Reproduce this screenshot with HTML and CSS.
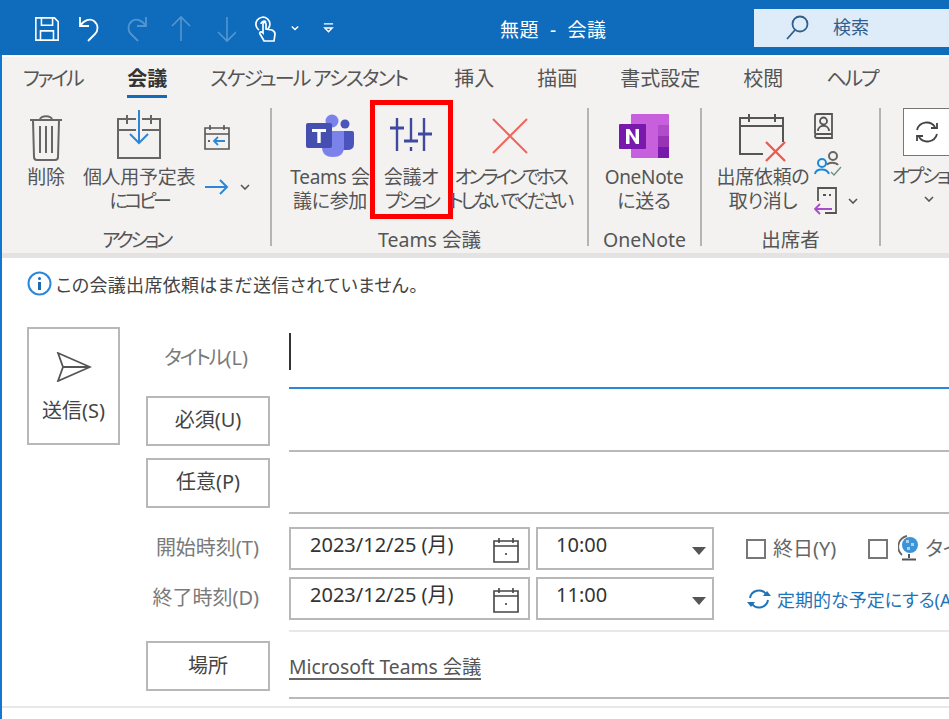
FILE: index.html
```html
<!DOCTYPE html>
<html lang="ja">
<head>
  <meta charset="UTF-8" />
  <meta name="viewport" content="width=device-width, initial-scale=1.0" />
  <title>無題 - 会議</title>
  <link rel="stylesheet" href="styles.css">
</head>
<body>
  <header class="titlebar">
    <div class="qat">
      <svg class="qat-icon" width="26" height="26" viewBox="0 0 28 28" fill="none" stroke="#fff" stroke-width="1.7"><path d="M2 2h20l4 4v20H2zM8 2v8h12V2M7 26V16h14v10"/></svg>
      <svg class="qat-icon" width="26" height="28" viewBox="3 0 26 28" fill="none" stroke="#fff" stroke-width="1.8"><path d="M4 2v9h9M4 11c4-6 10-8 14-5 5 4 4 10 1 13l-7 7"/></svg>
      <svg class="qat-icon dim" width="26" height="28" viewBox="0 0 26 28" fill="none" stroke="#fff" stroke-width="1.8"><path d="M22 2v9h-9M22 11c-4-6-10-8-14-5-5 4-4 10-1 13l7 7"/></svg>
      <svg class="qat-icon dim" width="24" height="28" viewBox="0 0 24 28" fill="none" stroke="#fff" stroke-width="1.6"><path d="M12 26V2M3 11l9-9 9 9"/></svg>
      <svg class="qat-icon dim" width="24" height="28" viewBox="-3 0 24 28" fill="none" stroke="#fff" stroke-width="1.6"><path d="M12 2v24M3 17l9 9 9-9"/></svg>
      <svg class="qat-touch" width="22" height="28" viewBox="0 0 22 28" fill="none" stroke="#fff" stroke-width="1.7"><path d="M4 15a7 7 0 1 1 9-1M6 9a3 3 0 0 1 5-2M8 24l-3-5c-1-2 1-3 3-1V9c0-2 3-2 3 0v5l6 1c2 1 3 2 3 4l-1 7H9z"/></svg>
      <svg class="qat-chev" width="8" height="6" viewBox="0 0 10 6" fill="none" stroke="#fff" stroke-width="1.8"><path d="M1 1l4 4 4-4"/></svg>
      <svg class="qat-more" width="11" height="12" viewBox="0 0 12 12" fill="none" stroke="#fff" stroke-width="1.5"><path d="M1 1.500h10M2 6l4 4 4-4z"/></svg>
    </div>
    <div class="doc-title">無題 &nbsp;- &nbsp;会議</div>
    <div class="search">
      <svg width="26" height="28" viewBox="0 0 26 28" fill="none" stroke="#2f5f8f" stroke-width="1.8"><circle cx="16" cy="10" r="7.5"/><path d="M11 16l-8 9"/></svg>
      <span>検索</span>
    </div>
  </header>

  <div class="window">
    <section class="ribbon">
      <nav class="tabs">
        <span class="tab tab-file">ファイル</span>
        <span class="tab active">会議</span>
        <span class="tab tab-assist">スケジュール アシスタント</span>
        <span class="tab">挿入</span>
        <span class="tab">描画</span>
        <span class="tab">書式設定</span>
        <span class="tab">校閲</span>
        <span class="tab tab-help">ヘルプ</span>
      </nav>
      <div class="groups">
        <div class="group g-action">
          <div class="group-body">
            <div class="tool t-delete">
              <svg class="tool-icon" width="36" height="48" viewBox="0 0 36 48" fill="none" stroke="#666" stroke-width="2"><path d="M2 7h32M5 7l1 37q0 3 3 3h18q3 0 3-3l1-37M12 7c0-5 12-5 12 0M12 13v27M18 13v27M24 13v27"/></svg>
              <span>削除</span>
            </div>
            <div class="tool t-copy">
              <svg class="tool-icon" width="46" height="50" viewBox="0 0 46 50" fill="none" stroke="#666" stroke-width="2"><path d="M20 9H2v39h42V9H26M2 20h18M26 20h18M11 5v9M35 5v9"/><path stroke="#2b88d8" d="M23 0v33M14 24l9 9 9-9"/></svg>
              <span>個人用予定表<br><b class="kana-l">にコピー</b></span>
            </div>
            <div class="small-col sc-action">
              <svg width="26" height="28" viewBox="0 0 26 28" fill="none" stroke="#555" stroke-width="1.6"><path d="M1 5h24v21H1zM1 11h24M6 2v5M20 2v5"/><path stroke="#2b88d8" stroke-width="1.8" d="M21 18H10M14 14l-4 4 4 4"/><circle cx="5" cy="18" r="1" fill="#333" stroke="none"/></svg>
              <div class="small-row">
                <svg width="26" height="18" viewBox="0 0 26 18" fill="none" stroke="#2b88d8" stroke-width="2"><path d="M1 9h22M16 2l7 7-7 7"/></svg>
                <svg class="chev" width="10" height="6" viewBox="0 0 10 6" fill="none" stroke="#555" stroke-width="1.6"><path d="M1 1l4 4 4-4"/></svg>
              </div>
            </div>
          </div>
          <div class="group-label kana-l">アクション</div>
        </div>

        <div class="group g-teams">
          <div class="group-body">
            <div class="tool t-join">
              <svg class="tool-icon" width="48" height="44" viewBox="0 0 48 44">
                <circle cx="39" cy="11" r="4.5" fill="#4b53bc"/>
                <path d="M30 18h16q2 0 2 2v11q0 6-7 6h-11z" fill="#4b53bc"/>
                <circle cx="26" cy="8" r="6.5" fill="#7b83eb"/>
                <path d="M16 18h22v16q0 10-11 10t-11-10z" fill="#7b83eb"/>
                <rect x="0" y="10" width="26" height="25" rx="2" fill="#444fb0"/>
                <path d="M6 16h14v3h-5.300v11h-3.400V19H6z" fill="#fff"/>
              </svg>
              <span>Teams 会<br>議に参加</span>
            </div>
            <div class="tool t-options">
              <svg class="tool-icon" width="42" height="34" viewBox="0 0 42 34" fill="none" stroke="#3f4a9e" stroke-width="2.400"><path d="M7 0v33M21 0v23M21 29v4M34 0v33"/><path stroke-width="3" d="M0 10h14M14 23h14M28 16h14"/></svg>
              <span>会議オ<br><b class="kana-l">プション</b></span>
              <div class="highlight"></div>
            </div>
            <div class="tool t-nohost">
              <svg class="tool-icon" width="36" height="36" viewBox="0 0 36 36" fill="none" stroke="#f0665e" stroke-width="2"><path d="M1 1l34 34M35 1L1 35"/></svg>
              <span class="kana">オンラインでホス<br>トしないでください</span>
            </div>
          </div>
          <div class="group-label">Teams 会議</div>
        </div>

        <div class="group g-onenote">
          <div class="group-body">
            <div class="tool t-onenote">
              <svg class="tool-icon" width="50" height="46" viewBox="0 0 50 46">
                <rect x="12" y="0" width="38" height="44" rx="1" fill="#c85fdc"/>
                <rect x="39" y="11" width="11" height="11" fill="#b04cc8"/>
                <rect x="39" y="22" width="11" height="11" fill="#9a32b5"/>
                <rect x="39" y="33" width="11" height="11" fill="#7719aa"/>
                <rect x="0" y="10" width="27" height="25" rx="1" fill="#7719aa"/>
                <path d="M7 30V15h3.500l6 9.500V15H20v15h-3.200l-6.300-10v10z" fill="#fff"/>
              </svg>
              <span>OneNote<br>に送る</span>
            </div>
          </div>
          <div class="group-label">OneNote</div>
        </div>

        <div class="group g-attend">
          <div class="group-body">
            <div class="tool t-cancel">
              <svg class="tool-icon" width="48" height="50" viewBox="0 0 48 50" fill="none" stroke="#555" stroke-width="2"><path d="M24 40H1V4h43v24M1 12h43M10 0v8M36 0v8"/><path stroke="#ee5a50" stroke-width="2.400" d="M27 28l19 19M46 28L27 47"/></svg>
              <span>出席依頼の<br>取り消し</span>
            </div>
            <div class="small-col sc-attend">
              <svg width="20" height="26" viewBox="0 0 20 26" fill="none" stroke="#555" stroke-width="1.800"><path d="M1 21V3q0-2 2-2h15v24H3q-2 0-2-2 0-2 2-2h15"/><circle cx="9.500" cy="8" r="3.500"/><path d="M4 18c0-7 11-7 11 0"/></svg>
              <svg width="28" height="26" viewBox="0 0 28 26" fill="none" stroke-width="2"><circle cx="19" cy="6" r="4" stroke="#666"/><path stroke="#666" d="M13 15c1-3 9-3 11 0"/><circle cx="8" cy="13" r="4" stroke="#1e88d8"/><path stroke="#1e88d8" d="M1 24c1-6 12-6 14 0"/><path stroke="#6f8f8a" stroke-width="1.400" d="M17 22l3 3 7-8"/></svg>
              <div class="small-row">
                <svg width="24" height="28" viewBox="0 0 24 28" fill="none" stroke="#555" stroke-width="1.800"><path d="M4 14V1h18v25H11"/><path stroke-width="2" d="M9 8h3M15 8h2"/><path stroke="#a64dc9" stroke-width="1.800" d="M18 22H1M6 17l-5 5 5 5"/></svg>
                <svg class="chev" width="10" height="6" viewBox="0 0 10 6" fill="none" stroke="#555" stroke-width="1.600"><path d="M1 1l4 4 4-4"/></svg>
              </div>
            </div>
          </div>
          <div class="group-label">出席者</div>
        </div>

        <div class="group g-more">
          <div class="option-box">
            <svg width="26" height="26" viewBox="0 0 26 26" fill="none" stroke="#444" stroke-width="1.800"><path d="M3 11a10 10 0 0 1 18-3M23 15a10 10 0 0 1-18 3"/><path d="M17 9h6V4M9 17H3v5"/></svg>
          </div>
          <div class="option-label kana">オプション</div>
          <svg class="option-chev" width="10" height="6" viewBox="0 0 10 6" fill="none" stroke="#555" stroke-width="1.600"><path d="M1 1l4 4 4-4"/></svg>
        </div>
      </div>
    </section>

    <div class="notice">
      <svg width="25" height="25" viewBox="0 0 25 25"><circle cx="12.500" cy="12.500" r="11" fill="none" stroke="#2b88d8" stroke-width="2"/><circle cx="12.500" cy="7.500" r="1.500" fill="#1a6cb0"/><path d="M11 11h3v8h-3z" fill="#1a6cb0"/></svg>
      <span>この会議出席依頼はまだ送信されていません。</span>
    </div>

    <form class="compose">
      <div class="send">
        <svg width="36" height="30" viewBox="0 0 36 30" fill="none" stroke="#555" stroke-width="1.800"><path d="M2 1l32 14L2 29l5-14zM7 15h27"/></svg>
        <span>送信(S)</span>
      </div>
      <div class="fields">
        <div class="row row-title">
          <label class="label"><b class="kana-s">タイトル</b>(L)</label>
          <div class="field"><i class="cursor"></i></div>
        </div>
        <div class="row row-required">
          <div class="btn">必須(U)</div>
          <div class="field"></div>
        </div>
        <div class="row row-optional">
          <div class="btn">任意(P)</div>
          <div class="field"></div>
        </div>
        <div class="times">
          <div class="row time-row">
            <label class="label">開始時刻(T)</label>
            <div class="time-inputs">
              <div class="date-box">2023/12/25 (月)
                <svg width="26" height="26" viewBox="0 0 26 26" fill="none" stroke="#444" stroke-width="1.600"><path d="M1 4h24v21H1zM1 9h24M6 1v5M20 1v5"/><circle cx="13" cy="17" r="1" fill="#333" stroke="none"/></svg>
              </div>
              <div class="time-box">10:00<i class="caret"></i></div>
              <div class="opt opt-allday"><i class="check"></i>終日(Y)</div>
              <div class="opt opt-zone"><i class="check"></i>
                <svg width="22" height="26" viewBox="0 0 22 26"><path d="M9 1a11 11 0 0 0-5 19" fill="none" stroke="#666" stroke-width="1.800"/><circle cx="12" cy="10" r="8" fill="#3c93d8"/><path d="M8 5h3v3H8zM13 8h3v3h-3zM9 12h3v3H9z" fill="#a9d2f0"/><path d="M11 19v4M4 24.500h14" stroke="#555" stroke-width="2"/></svg>
                タイムゾーン
              </div>
            </div>
          </div>
          <div class="row time-row">
            <label class="label">終了時刻(D)</label>
            <div class="time-inputs">
              <div class="date-box">2023/12/25 (月)
                <svg width="26" height="26" viewBox="0 0 26 26" fill="none" stroke="#444" stroke-width="1.600"><path d="M1 4h24v21H1zM1 9h24M6 1v5M20 1v5"/><circle cx="13" cy="17" r="1" fill="#333" stroke="none"/></svg>
              </div>
              <div class="time-box">11:00<i class="caret"></i></div>
              <div class="repeat">
                <svg width="26" height="22" viewBox="0 0 26 22" fill="none" stroke="#1f74b8" stroke-width="2"><path d="M4 10a9 9 0 0 1 16-4M22 12a9 9 0 0 1-16 4"/><path fill="#1f74b8" stroke="none" d="M17 8h8l-4-5zM9 14H1l4 5z"/></svg>
                定期的な予定にする(A)
              </div>
            </div>
          </div>
        </div>
        <div class="row row-location">
          <div class="btn">場所</div>
          <div class="field"><a class="location">Microsoft Teams 会議</a></div>
        </div>
      </div>
    </form>
    <div class="bottom-line"></div>
  </div>
</body>
</html>
```

FILE: styles.css
```css
* {
  box-sizing: border-box;
}

html, body {
  height: 100%;
}

body {
  margin: 0;
  background: #fff;
  color: #444;
  font-family: "Noto Sans", "Noto Sans CJK JP", sans-serif;
  font-size: 20px;
  font-feature-settings: "palt";
  overflow: hidden;
}

b { font-weight: 400; }

/* kana runs are set much tighter than kanji in the original UI font */
.kana-s { letter-spacing: -2px; }
.kana { letter-spacing: -2.500px; }
.kana-l { letter-spacing: -3.400px; }

/* title bar */
.titlebar {
  height: 55px;
  background: #0f6cbd;
  color: #fff;
  display: flex;
}

.qat {
  display: flex;
  align-items: center;
  width: 500px;
  padding: 0 0 0 34px;
  height: 58px;
}

.qat-icon { margin-right: 19px; flex: none; }
.qat-icon.dim { opacity: .28; }
.qat-touch { margin-right: 14px; flex: none; }
.qat-chev { margin: 0 24px 3px 0; flex: none; }
.qat-more { margin-bottom: 2px; flex: none; }

.doc-title {
  width: 254px;
  padding-top: 17px;
  font-size: 19px;
  letter-spacing: .5px;
  line-height: 26px;
  white-space: nowrap;
}

.search {
  flex: 1;
  height: 38px;
  margin-top: 9px;
  padding-left: 30px;
  background: #deecf9;
  color: #2f5f8f;
  display: flex;
  align-items: center;
  gap: 23px;
  font-size: 18px;
}

.search span { margin-bottom: 4px; }

/* everything under the title bar */
.window {
  border-left: 2px solid #1277d0;
  height: 664px;
}

.ribbon {
  height: 203px;
  background: #f3f2f1;
  border-top: 2px solid #fff;
  border-bottom: 5px solid #e4e3e2;
}

.tabs {
  display: flex;
  height: 51px;
  padding: 7px 0 0 21px;
  font-size: 20px;
  line-height: 30px;
  color: #555;
  white-space: nowrap;
}

.tab { margin-right: 43px; }
.tab-file { letter-spacing: -2.500px; margin-right: 45px; }
.tab-assist { letter-spacing: -1.800px; margin-right: 47px; }
.tab-help { letter-spacing: -2px; }

.tab.active {
  height: 34px;
  font-weight: 700;
  color: #333;
  border-bottom: 3px solid #0f6cbd;
}

.groups {
  display: flex;
  height: 138px;
}

.group {
  display: flex;
  flex-direction: column;
  border-right: 2px solid #b5b4b3;
  flex: none;
}

.group-body {
  display: flex;
  flex: 1;
}

.group-label {
  height: 24px;
  margin-bottom: -6px;
  text-align: center;
  font-size: 19.500px;
  line-height: 24px;
  color: #555;
}

.g-action { width: 270px; }
.g-teams { width: 317px; }
.g-onenote { width: 113px; }
.g-attend { width: 179px; }
.g-more { border-right: 0; position: relative; width: 67px; }

.tool {
  display: grid;
  grid-template-rows: 57px auto;
  justify-items: center;
  align-content: start;
  position: relative;
  font-size: 19px;
  line-height: 24px;
  text-align: center;
  color: #555;
  white-space: nowrap;
}

.tool span { letter-spacing: -.3px; }
.tool span.kana { letter-spacing: -3.300px; }

.t-delete { width: 52px; margin-left: 18px; }
.t-delete .tool-icon { margin-top: 5px; }
.t-copy { width: 122px; margin-left: 6px; }
.t-copy .tool-icon { margin-top: 2px; }
.t-join { width: 90px; margin-left: 13px; }
.t-join .tool-icon { margin-top: 5px; }
.t-options { width: 72px; }
.t-options .tool-icon { margin-top: 10px; }
.t-nohost { width: 126px; }
.t-nohost .tool-icon { margin-top: 10px; }
.t-onenote { width: 88px; margin-left: 11px; }
.t-onenote .tool-icon { margin-top: 6px; }
.t-cancel { width: 96px; margin-left: 13px; }
.t-cancel .tool-icon { margin-top: 6px; }

.highlight {
  position: absolute;
  left: -5px;
  top: -8px;
  width: 83px;
  height: 119px;
  border: 5px solid #f00;
}

.small-col {
  display: flex;
  flex-direction: column;
  white-space: nowrap;
}

.small-row { display: flex; align-items: center; }
.chev { margin-left: 10px; }

.sc-action { margin-left: 4px; padding-top: 15px; gap: 27px; }
.sc-attend { margin-left: 3px; padding-top: 5px; gap: 11px; align-items: flex-start; }

.option-box {
  width: 60px;
  height: 48px;
  margin-left: 22px;
  padding-left: 10px;
  background: #fff;
  border: 1px solid #777;
  display: flex;
  align-items: center;
}

.option-label {
  margin: 6px 0 0 11px;
  font-size: 19px;
  line-height: 28px;
  white-space: nowrap;
  color: #555;
}

.option-chev { margin: 6px 0 0 43px; }

/* message bar */
.notice {
  display: flex;
  align-items: center;
  gap: 4px;
  height: 25px;
  margin: 13px 0 0 25px;
  font-size: 18px;
  letter-spacing: .3px;
  color: #444;
  white-space: nowrap;
}

/* form */
.compose {
  display: flex;
  margin: 31px 0 0 25px;
}

.send {
  width: 93px;
  height: 118px;
  border: 2px solid #b8b8b8;
  display: flex;
  flex-direction: column;
  align-items: center;
  padding-top: 23px;
  gap: 17px;
  flex: none;
  line-height: 24px;
  color: #444;
}

.fields {
  flex: 1;
  margin-left: 26px;
  min-width: 0;
}

.row {
  display: grid;
  grid-template-columns: 124px 1fr;
  column-gap: 19px;
}

.label {
  text-align: right;
  line-height: 24px;
  color: #7a7a7a;
  white-space: nowrap;
}

.field { border-bottom: 2px solid #b9b9b9; }

.btn {
  height: 50px;
  padding-bottom: 2px;
  border: 2px solid #b8b8b8;
  display: flex;
  align-items: center;
  justify-content: center;
  line-height: 24px;
  color: #444;
}

.row-title { height: 62px; }
.row-title .label { padding: 19px 22px 0 0; }
.row-title .field { border-bottom-color: #2b88d8; padding-top: 6px; }

.cursor {
  display: block;
  width: 2px;
  height: 37px;
  background: #333;
}

.row-required { height: 63px; padding-top: 7px; }
.row-optional { height: 62px; padding-top: 6px; }

.times {
  padding-top: 13px;
  height: 118px;
  background: linear-gradient(#e8e8e8, #e8e8e8) 143px 100%/100% 2px no-repeat;
}

.time-row { height: 50px; }
.time-row .label { padding: 9px 11px 0 0; }

.time-inputs {
  display: flex;
  align-items: flex-start;
  white-space: nowrap;
}

.date-box {
  width: 241px;
  height: 43px;
  flex: none;
  border: 2px solid #b8b8b8;
  padding: 2px 9px 0 19px;
  display: flex;
  justify-content: space-between;
  line-height: 28px;
  color: #333;
}

.date-box svg { margin-top: 6px; }

.time-box {
  width: 178px;
  height: 43px;
  flex: none;
  margin-left: 6px;
  border: 2px solid #b8b8b8;
  padding: 2px 0 0 18px;
  position: relative;
  line-height: 28px;
  color: #333;
}

.caret {
  position: absolute;
  right: 6px;
  top: 18px;
  border: 7px solid transparent;
  border-top: 8px solid #555;
  border-bottom: 0;
}

.opt {
  display: flex;
  align-items: center;
  height: 41px;
  color: #666;
  flex: none;
}

.opt-allday { margin-left: 32px; }
.opt-zone { margin-left: 32px; gap: 5px; }

.check {
  display: block;
  width: 20px;
  height: 20px;
  margin-top: 2px;
  border: 2px solid #777;
  margin-right: 7px;
}

.opt-zone .check { margin-right: 5px; }

.repeat {
  display: flex;
  align-items: center;
  gap: 5px;
  height: 43px;
  margin-left: 32px;
  font-size: 18px;
  color: #1f74b8;
  flex: none;
}

.row-location { height: 67px; padding-top: 9px; }
.row-location .btn { padding-bottom: 0; }
.row-location .field { display: flex; align-items: flex-start; margin-top: -9px; padding-top: 23px; }

.location {
  font-size: 19.300px;
  line-height: 24px;
  color: #555;
  border-bottom: 2px solid #666;
  height: 25px;
}

.bottom-line {
  height: 2px;
  margin-top: 7px;
  background: #e8e8e8;
}
```
